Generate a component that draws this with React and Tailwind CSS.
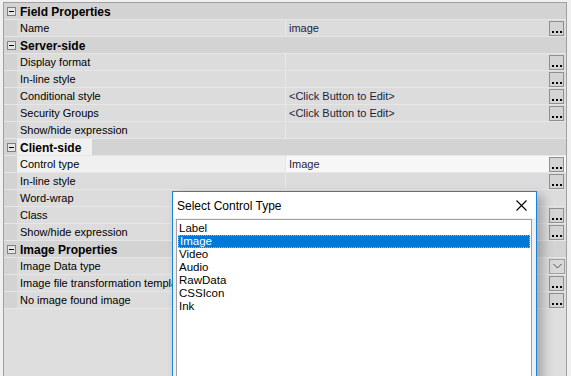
import React from "react";

const rows = [
  { kind: "cat", label: "Field Properties" },
  { label: "Name", value: "image", btn: "dots" },
  { kind: "cat", label: "Server-side" },
  { label: "Display format", btn: "dots" },
  { label: "In-line style", btn: "dots" },
  { label: "Conditional style", value: "<Click Button to Edit>", btn: "dots" },
  { label: "Security Groups", value: "<Click Button to Edit>", btn: "dots" },
  { label: "Show/hide expression" },
  { kind: "cat", label: "Client-side", focus: true },
  { label: "Control type", value: "Image", btn: "dots", selected: true },
  { label: "In-line style", btn: "dots" },
  { label: "Word-wrap" },
  { label: "Class", btn: "dots" },
  { label: "Show/hide expression", btn: "dots" },
  { kind: "cat", label: "Image Properties" },
  { label: "Image Data type", btn: "drop" },
  { label: "Image file transformation template", btn: "dots" },
  { label: "No image found image", btn: "dots" },
];

const items = ["Label", "Image", "Video", "Audio", "RawData", "CSSIcon", "Ink"];

function DotsButton() {
  return (
    <div className="flex h-[15px] w-[15px] items-end justify-center gap-[2px] border border-[#8f8f8f] bg-[#d4d4d4] pb-[2px]">
      <span className="h-[2px] w-[2px] bg-black" />
      <span className="h-[2px] w-[2px] bg-black" />
      <span className="h-[2px] w-[2px] bg-black" />
    </div>
  );
}

function DropButton() {
  return (
    <div className="flex h-[15px] w-[16px] items-center justify-center border border-[#a0a0a0] bg-[#d8d8d8]">
      <svg width="9" height="6" viewBox="0 0 9 6">
        <path d="M0.5 1 L4.5 5 L8.5 1" fill="none" stroke="#505050" strokeWidth="1" />
      </svg>
    </div>
  );
}

function MinusBox() {
  return (
    <div className="flex h-[9px] w-[9px] items-center justify-center border border-[#808080] bg-[#e4e4e4]">
      <span className="h-px w-[5px] bg-black" />
    </div>
  );
}

export default function App() {
  return (
    <div
      className="relative h-[376px] w-[571px] overflow-hidden bg-[#f0f0f0] pt-[2px] text-[11px] text-black"
      style={{ fontFamily: "'Liberation Sans', Arial, sans-serif" }}
    >
      {/* Property grid */}
      <div className="ml-[3px] h-[400px] w-[564px] border-l border-t border-r border-[#a0a0a0] bg-[#dedede]">
        {rows.map((r, i) =>
          r.kind === "cat" ? (
            <div key={i} className="flex h-[17px] border-b border-[#e6e6e6] bg-[#d3d3d3]">
              <div className="flex w-[13px] items-center justify-center pl-[2px]">
                <MinusBox />
              </div>
              <div
                className={`flex items-center pl-[3px] pr-[4px] pt-px font-bold text-[12px] ${
                  r.focus ? "w-[75px] bg-[#f0f0f0]" : ""
                }`}
              >
                {r.label}
              </div>
            </div>
          ) : (
            <div key={i} className="flex h-[17px] border-b border-[#e6e6e6] bg-[#d3d3d3]">
              <div className="w-[13px]" />
              <div
                className={`flex w-[268px] items-center overflow-hidden whitespace-nowrap pl-[3px] pt-px ${
                  r.selected ? "bg-[#f0f0f0]" : "bg-[#dcdcdc]"
                }`}
              >
                {r.label}
              </div>
              <div
                className={`flex flex-1 items-center border-l border-[#e6e6e6] pl-[3px] ${
                  r.selected ? "bg-[#f7f7f7]" : "bg-[#dcdcdc]"
                }`}
              >
                <span className="flex-1 whitespace-nowrap pt-px text-[#1c1c3c]">{r.value}</span>
                <div className="flex w-[18px] items-center justify-start pl-px">
                  {r.btn === "dots" && <DotsButton />}
                  {r.btn === "drop" && <DropButton />}
                </div>
              </div>
            </div>
          )
        )}
      </div>

      {/* Dialog overlay */}
      <div
        className="absolute left-[172px] top-[191px] h-[200px] w-[365px] border border-[#1883d7] bg-[#f0f0f0] shadow-[6px_4px_10px_rgba(0,0,0,0.25)]"
        style={{ fontFamily: "'Liberation Sans', 'Segoe UI', Arial, sans-serif" }}
      >
        <div className="flex h-[26px] items-center justify-between bg-white pl-[4px] pr-[9px] pt-px text-[12px]">
          <span>Select Control Type</span>
          <svg width="11" height="11" viewBox="0 0 11 11">
            <path d="M0.5 0.5 L10.5 10.5 M10.5 0.5 L0.5 10.5" stroke="#000" strokeWidth="1.1" />
          </svg>
        </div>
        <div className="ml-[3px] mt-[1px] h-[200px] w-[356px] border border-[#a0a0a0] bg-white pt-[2px] text-[11.5px] leading-[13px]">
          {items.map((it) =>
            it === "Image" ? (
              <div
                key={it}
                className="mx-[1px] h-[13px] border border-dotted border-[#f5a04a] bg-[#0078d7] pl-[1px] leading-[11px] text-white"
              >
                {it}
              </div>
            ) : (
              <div key={it} className="h-[13px] pl-[2px]">
                {it}
              </div>
            )
          )}
        </div>
      </div>
    </div>
  );
}
